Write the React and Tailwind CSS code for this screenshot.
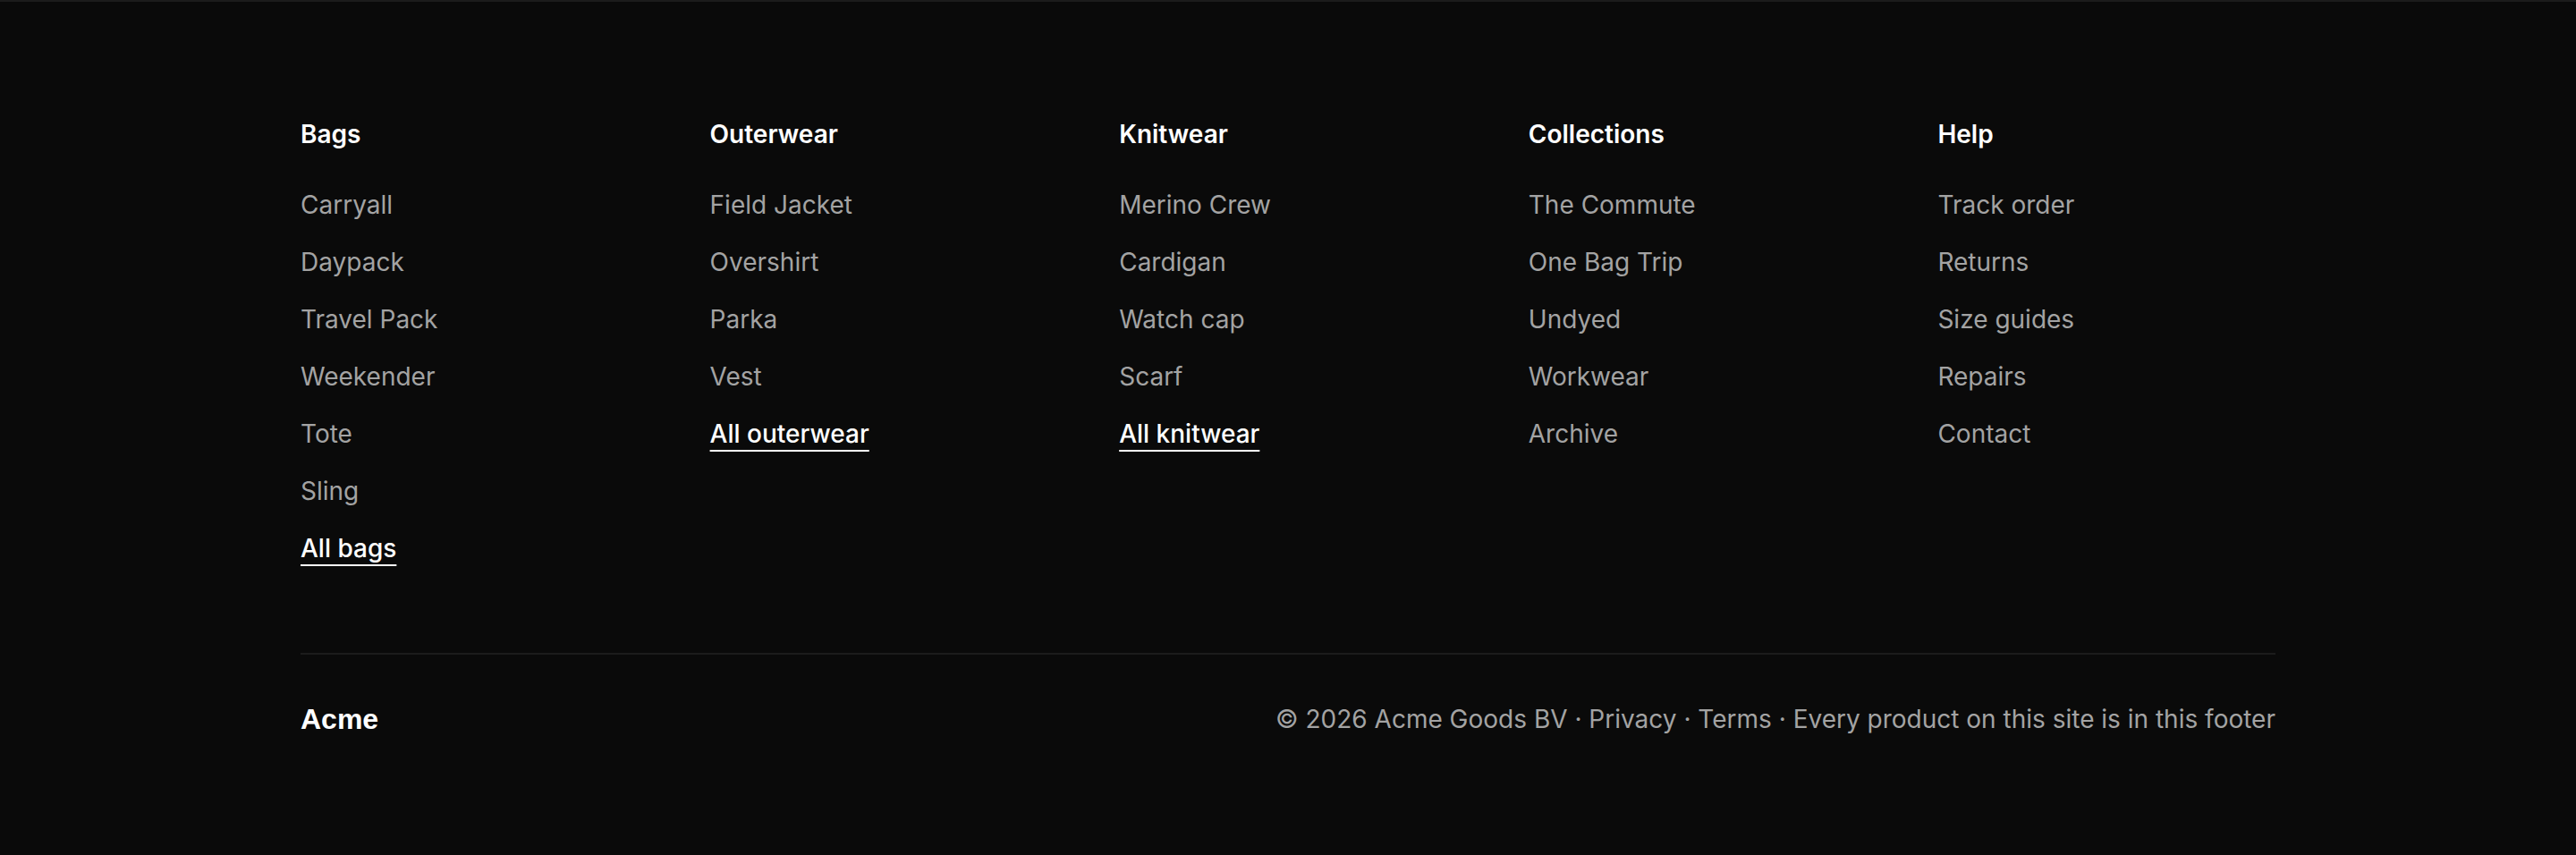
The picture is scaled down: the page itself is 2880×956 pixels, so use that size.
import React from "react";

const columns = [
  { title: "Bags", items: ["Carryall", "Daypack", "Travel Pack", "Weekender", "Tote", "Sling"], all: "All bags" },
  { title: "Outerwear", items: ["Field Jacket", "Overshirt", "Parka", "Vest"], all: "All outerwear" },
  { title: "Knitwear", items: ["Merino Crew", "Cardigan", "Watch cap", "Scarf"], all: "All knitwear" },
  { title: "Collections", items: ["The Commute", "One Bag Trip", "Undyed", "Workwear", "Archive"] },
  { title: "Help", items: ["Track order", "Returns", "Size guides", "Repairs", "Contact"] },
];

export default function App() {
  return (
    <footer className="min-h-[956px] bg-[#0a0a0a] border-t-2 border-[#1c1c1c] font-['Inter',sans-serif]">
      <div className="w-[2208px] mx-auto pt-[127px]">
        <div className="grid grid-cols-5 gap-x-[80px] pb-[96px]">
          {columns.map((c) => (
            <div key={c.title}>
              <h3 className="text-[28px] leading-[42px] font-semibold text-white">{c.title}</h3>
              <ul className="mt-[37px] flex flex-col gap-[22px]">
                {c.items.map((i) => (
                  <li key={i} className="text-[28px] leading-[42px] text-[#a3a3a3]">
                    <a href="#">{i}</a>
                  </li>
                ))}
                {c.all && (
                  <li className="text-[28px] leading-[42px] font-medium text-white">
                    <a href="#" className="underline decoration-2 underline-offset-8">{c.all}</a>
                  </li>
                )}
              </ul>
            </div>
          ))}
        </div>
        <div className="border-t-2 border-[#1c1c1c] pt-[51px] flex justify-between items-center">
          <div className="font-['Liberation_Sans',Arial,sans-serif] font-bold text-[32px] leading-none text-white">Acme</div>
          <p className="text-[28px] leading-[42px] text-[#a3a3a3]">
            © 2026 Acme Goods BV · <a href="#">Privacy</a> · <a href="#">Terms</a> · Every product on this site is in this footer
          </p>
        </div>
      </div>
    </footer>
  );
}
